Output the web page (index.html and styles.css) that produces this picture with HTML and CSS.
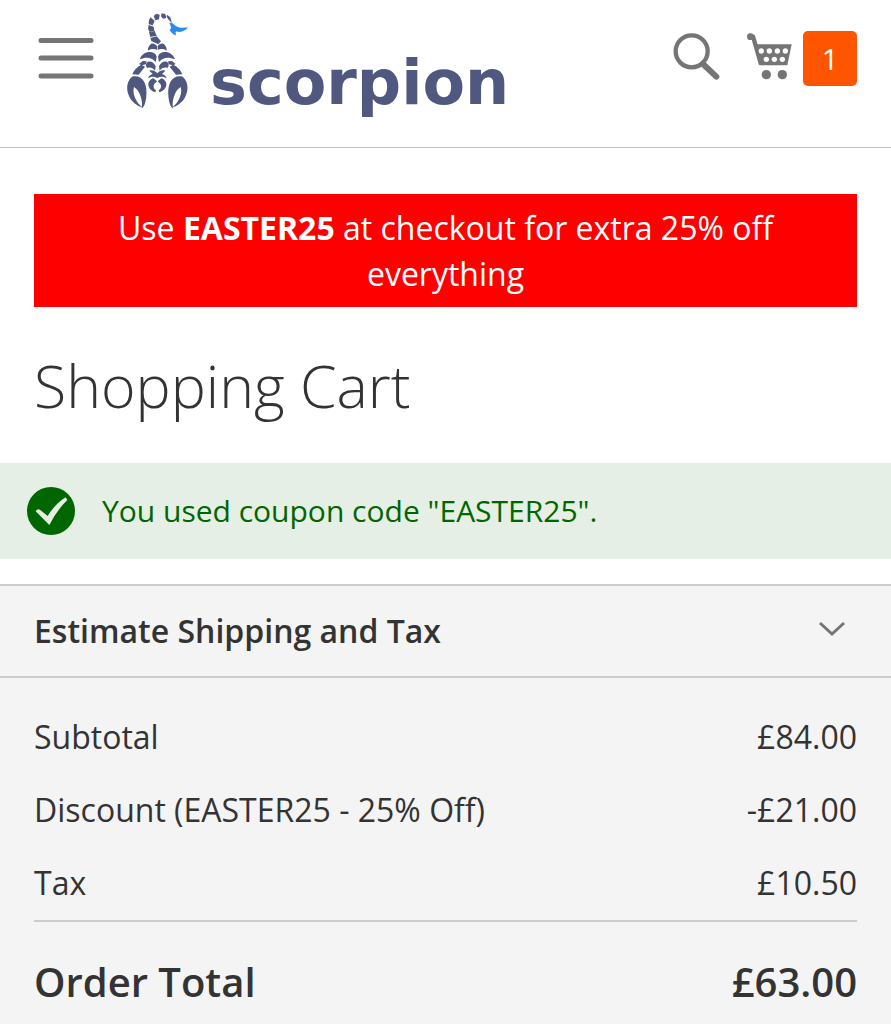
FILE: index.html
```html
<!DOCTYPE html>
<html lang="en">
<head>
<meta charset="utf-8">
<meta name="viewport" content="width=device-width, initial-scale=1">
<title>Shopping Cart</title>
<link rel="stylesheet" href="styles.css">
</head>
<body>
<header class="header">
  <button class="icon-button menu" type="button" aria-label="Menu">
    <svg width="56" height="42" viewBox="0 0 56 42" fill="none" stroke="#757575" stroke-width="5" stroke-linecap="round"><path d="M3 3.500H53M3 21H53M3 39H53"/></svg>
  </button>
  <a class="logo" href="#">
    <svg class="logo-mark" width="64" height="98" viewBox="48 36 192 294" fill="#50587f" aria-hidden="true">
      <path d="M155 40l11 2 3 12-10 2-6-7z"/>
      <path d="M171 44l10 8 5 18-10-11-6-9z"/>
      <path d="M139 41l10 3-2 14-11 3-5-13z"/>
      <path d="M122 52l12 11-6 13-12-3 1-13z"/>
      <path d="M116 75l15 5 2 13-14 3-5-9z"/>
      <path d="M117 97l17-4 6 14-19 4z"/>
      <path d="M121 114l19-5 13 15-8 9-21-10z"/>
      <path d="M178 69c8-3 14 5 21 10 13 7 24 4 35 3-7 10-17 14-29 14-3-1-7-2-8 0-1 4 2 7 0 10-8-2-16-10-19-18 4 1 6-3 5-7z" fill="#2b8ced"/>
      <path d="M123 132c5-3 11-1 18 6v11c-12-4-21-2-27 3-1-8 3-15 9-20zM161 132c-5-3-11-1-18 6v11c12-4 21-2 27 3 1-8-3-15-9-20z"/>
      <path d="M89 178c5-15 18-23 33-22 9 1 16 6 18 14l-3 16c-13-14-28-16-48-8zM195 178c-5-15-18-23-33-22-9 1-16 6-18 14l3 16c13-14 28-16 48-8z"/>
      <path d="M98 183l12 1-2 9-13 3-8-4zM186 183l-12 1 2 9 13 3 8-4z"/>
      <path d="M114 185c10-2 18 3 23 14l-2 13c-6-8-15-11-23-8-6-6-5-15 2-19zM170 185c-10-2-18 3-23 14l2 13c6-8 15-11 23-8 6-6 5-15-2-19z"/>
      <path d="M94 194l11 6-19 24-19-1c5-13 14-23 27-29zM190 194l-11 6 19 24 19-1c-5-13-14-23-27-29z"/>
      <path d="M118 212c10-3 17 1 24 8 7-7 14-11 24-8l-10 10c8 2 13 7 14 13-10-7-18-6-28-1-10-5-18-6-28 1 1-6 6-11 14-13z"/>
      <path d="M130 235c-8 2-15 9-15 18 0 11 8 20 21 24l2-6c-8-5-9-13-5-19l8-8zM154 235c8 2 15 9 15 18 0 11-8 20-21 24l-2-6c8-5 9-13 5-19l-8-8z"/>
      <path d="M66 230c16-4 29 2 37 16 8 16 8 40 3 61-2 9-6 15-11 19 2-15 1-28-5-42-4-11-10-18-18-23-4 14 0 30 8 42 5 8 11 14 17 19-16-4-31-16-39-32-11-22-8-46 8-60zM218 230c-16-4-29 2-37 16-8 16-8 40-3 61 2 9 6 15 11 19-2-15-1-28 5-42 4-11 10-18 18-23 4 14 0 30-8 42-5 8-11 14-17 19 16-4 31-16 39-32 11-22 8-46-8-60z"/>
    </svg>
    <span class="logo-name">scorpion</span>
  </a>
  <div class="actions">
    <button class="icon-button search" type="button" aria-label="Search">
      <svg width="47" height="48" viewBox="0 0 141 144" fill="none" stroke="#757575"><circle cx="56" cy="55" r="48" stroke-width="13"/><path d="M90 93l40 38" stroke-width="18" stroke-linecap="round"/></svg>
    </button>
    <a class="cart" href="#" aria-label="My cart, 1 item">
      <svg class="cart-icon" width="45" height="47" viewBox="0 0 135 141" fill="#757575" aria-hidden="true">
        <path d="M10 10h8l24 84" fill="none" stroke="#757575" stroke-width="13" stroke-linejoin="round"/>
        <circle cx="10" cy="11" r="10"/>
        <path d="M25 34H134L121 97H38z"/>
        <circle cx="58" cy="125" r="14"/><circle cx="106" cy="125" r="14"/>
        <g fill="#fff"><circle cx="43" cy="54" r="8"/><circle cx="67" cy="54" r="8"/><circle cx="91" cy="54" r="8"/><circle cx="115" cy="54" r="8"/><circle cx="58" cy="79" r="8"/><circle cx="82" cy="79" r="8"/><circle cx="106" cy="79" r="8"/></g>
      </svg>
      <span class="cart-count">1</span>
    </a>
  </div>
</header>
<main>
  <p class="promo">Use <strong>EASTER25</strong> at checkout for extra 25% off everything</p>
  <h1 class="title">Shopping Cart</h1>
  <div class="message" role="status">
    <svg width="48" height="48" viewBox="0 0 144 144" aria-hidden="true"><circle cx="72" cy="72" r="72" fill="#060"/><path d="M26 73q6-10 14-4l22 18q22-36 54-56l5 8q-31 30-54 75z" fill="#e5efe5"/></svg>
    <span>You used coupon code "EASTER25".</span>
  </div>
  <section class="summary">
    <button class="estimate" type="button" aria-expanded="false">
      <span>Estimate Shipping and Tax</span>
      <svg class="chevron" width="28" height="16" viewBox="0 0 28 16" fill="none" stroke="#757575" stroke-width="3"><path d="M2 2l12 11L26 2"/></svg>
    </button>
    <table class="totals">
      <tbody>
        <tr><th scope="row">Subtotal</th><td>£84.00</td></tr>
        <tr><th scope="row">Discount (EASTER25 - 25% Off)</th><td>-£21.00</td></tr>
        <tr><th scope="row">Tax</th><td>£10.50</td></tr>
      </tbody>
      <tfoot>
        <tr><th scope="row">Order Total</th><td>£63.00</td></tr>
      </tfoot>
    </table>
  </section>
</main>
</body>
</html>
```
FILE: styles.css
```css
* {
  box-sizing: border-box;
}

body {
  margin: 0;
  background: #fff;
  color: #333;
  font-family: "Open Sans", "Noto Sans", sans-serif;
  font-size: 32px;
  line-height: 46px;
}

svg {
  display: block;
  flex: none;
}

.header {
  display: flex;
  align-items: flex-start;
  padding: 12px 34px 26px 38px;
  border-bottom: 1px solid #c1c1c1;
}

.icon-button {
  padding: 0;
  border: 0;
  background: none;
}

.menu {
  margin-top: 25px;
}

.logo {
  display: flex;
  margin-left: 32px;
  color: #50587f;
  text-decoration: none;
}

.logo-name {
  margin: 32px 0 0 20px;
  font: bold 62px/77px "DejaVu Sans", sans-serif;
}

.actions {
  display: flex;
  align-items: center;
  gap: 27px;
  margin: 19px 0 0 auto;
}

.search,
.cart-icon {
  margin-bottom: 4px;
}

.cart {
  display: flex;
  align-items: center;
  gap: 11px;
  text-decoration: none;
}

.cart-count {
  width: 54px;
  border-radius: 5px;
  background: #ff5501;
  color: #fff;
  font-size: 30px;
  line-height: 55px;
  text-align: center;
}

.promo {
  margin: 46px 34px 0;
  padding: 11px 60px 10px;
  background: #f00;
  color: #fff;
  text-align: center;
}

.title {
  margin: 44px 34px;
  font-size: 59px;
  font-weight: 300;
  line-height: 68px;
}

.message {
  display: flex;
  align-items: center;
  gap: 27px;
  padding: 24px 27px;
  background: #e5efe5;
  color: #060;
  font-size: 30px;
  line-height: 48px;
}

.summary {
  min-height: 440px;
  margin-top: 25px;
  background: #f4f4f4;
}

.estimate {
  display: flex;
  align-items: center;
  justify-content: space-between;
  width: 100%;
  padding: 22px 45px 22px 34px;
  border: solid #ccc;
  border-width: 2px 0;
  background: none;
  color: inherit;
  font: inherit;
  font-weight: 600;
  text-align: left;
}

.chevron {
  margin-bottom: 4px;
}

.totals {
  width: calc(100% - 68px);
  margin: 23px 34px 0;
  border-collapse: collapse;
}

.totals th,
.totals td {
  padding: 13px 0 14px;
  font-weight: 400;
  text-align: left;
}

.totals td {
  text-align: right;
}

.totals tfoot tr {
  border-top: 2px solid #ccc;
}

.totals tfoot th,
.totals tfoot td {
  padding: 37px 0 16px;
  font-size: 40px;
  font-weight: 600;
}
```
